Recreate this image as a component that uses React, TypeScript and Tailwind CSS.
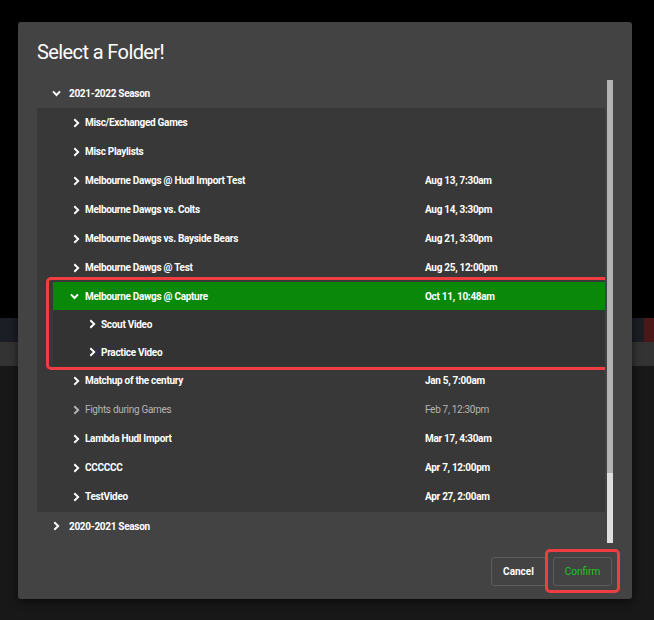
import React from 'react';

type Item = {
  name: string;
  date?: string;
  muted?: boolean;
};

const items: Item[] = [
  { name: 'Misc/Exchanged Games' },
  { name: 'Misc Playlists' },
  { name: 'Melbourne Dawgs @ Hudl Import Test', date: 'Aug 13, 7:30am' },
  { name: 'Melbourne Dawgs vs. Colts', date: 'Aug 14, 3:30pm' },
  { name: 'Melbourne Dawgs vs. Bayside Bears', date: 'Aug 21, 3:30pm' },
  { name: 'Melbourne Dawgs @ Test', date: 'Aug 25, 12:00pm' },
];

const itemsAfter: Item[] = [
  { name: 'Matchup of the century', date: 'Jan 5, 7:00am' },
  { name: 'Fights during Games', date: 'Feb 7, 12:30pm', muted: true },
  { name: 'Lambda Hudl Import', date: 'Mar 17, 4:30am' },
  { name: 'CCCCCC', date: 'Apr 7, 12:00pm' },
  { name: 'TestVideo', date: 'Apr 27, 2:00am' },
];

const ChevronRight = ({ muted }: { muted?: boolean }) => (
  <svg width="7" height="10" viewBox="0 0 7 10" className="shrink-0">
    <path d="M1.3 1.2 L5.2 5 L1.3 8.8" fill="none" stroke={muted ? '#b5b5b5' : '#ffffff'} strokeWidth="1.9" />
  </svg>
);

const ChevronDown = () => (
  <svg width="9" height="7" viewBox="0 0 9 7" className="shrink-0">
    <path d="M1 1.3 L4.5 5 L8 1.3" fill="none" stroke="#ffffff" strokeWidth="1.9" />
  </svg>
);

const Row: React.FC<{ item: Item; indent: number; nameWidth: number; short?: boolean }> = ({
  item,
  indent,
  nameWidth,
  short,
}) => (
  <div className={short ? 'flex h-[28px] items-center' : 'flex h-[29px] items-center'}>
    <div className="flex items-center" style={{ width: nameWidth, paddingLeft: indent }}>
      <div className="w-[12px]">
        <ChevronRight muted={item.muted} />
      </div>
      <span className={item.muted ? 'font-normal text-[#b5b5b5]' : 'font-bold text-white'}>{item.name}</span>
    </div>
    {item.date && (
      <span className={item.muted ? 'font-normal text-[#b5b5b5]' : 'font-bold text-white'}>{item.date}</span>
    )}
  </div>
);

export default function App() {
  return (
    <div className="relative h-[620px] w-[654px] overflow-hidden bg-black font-['Roboto',sans-serif]">
      {/* dimmed page behind the dialog */}
      <div className="flex h-full flex-col">
        <div className="h-[318px] bg-black" />
        <div className="flex h-[24px] bg-[#1b1e24]">
          <div className="flex-1" />
          <div className="w-[10px] bg-[#4a1818]" />
        </div>
        <div className="h-[24px] bg-[#333333]" />
        <div className="flex-1 bg-[#181818]" />
      </div>

      <div className="absolute left-[18px] top-[22px] flex h-[577px] w-[614px] flex-col rounded-[3px] bg-[#434343] shadow-[0_2px_10px_rgba(0,0,0,0.6)]">
        <h1 className="pl-[19px] pt-[18px] text-[20px] leading-[24px] tracking-[-0.6px] text-white">Select a Folder!</h1>

        <div className="mt-[15px] flex h-[464px] pl-[19px] pr-[19px] text-[10px] tracking-[-0.3px]">
          <div className="w-[568px] overflow-hidden">
            <div className="flex h-[29px] items-center pl-[15px] font-bold text-white">
              <div className="w-[17px]">
                <ChevronDown />
              </div>
              <span>2021-2022 Season</span>
            </div>

            <div className="bg-[#383838] pb-[1px]">
              {items.map((it) => (
                <Row key={it.name} item={it} indent={36} nameWidth={388} />
              ))}

              <div className="relative ml-[16px] bg-[#333333]">
                <div className="flex h-[28px] items-center bg-[#0a880a] font-bold text-white">
                  <div className="flex w-[372px] items-center pl-[17px]">
                    <div className="w-[15px]">
                      <ChevronDown />
                    </div>
                    <span>Melbourne Dawgs @ Capture</span>
                  </div>
                  <span>Oct 11, 10:48am</span>
                </div>
                <Row item={{ name: 'Scout Video' }} indent={36} nameWidth={372} short />
                <Row item={{ name: 'Practice Video' }} indent={36} nameWidth={372} short />
                <div className="pointer-events-none absolute -left-[7px] -right-[4px] -top-[5px] -bottom-[4px] rounded-[5px] border-[3px] border-[#ef3e42]" />
              </div>

              {itemsAfter.map((it) => (
                <Row key={it.name} item={it} indent={36} nameWidth={388} />
              ))}
            </div>

            <div className="flex h-[28px] items-center pl-[16px] font-bold text-white">
              <div className="w-[16px]">
                <ChevronRight />
              </div>
              <span>2020-2021 Season</span>
            </div>
          </div>
          <div className="ml-[2px] mt-[1px] flex h-[463px] w-[6px] flex-col">
            <div className="h-[393px] bg-[#b3b3b3]" />
            <div className="flex-1 bg-[#dedede]" />
          </div>
        </div>

        <div className="mt-[14px] flex justify-end gap-[7px] pr-[20px]">
          <button className="h-[29px] w-[55px] rounded-[3px] border border-[#5c5c5c] text-[10px] font-bold text-white">
            Cancel
          </button>
          <div className="relative">
            <button className="h-[29px] w-[59px] rounded-[3px] border border-[#5c5c5c] text-[10px] text-[#22c322]">
              Confirm
            </button>
            <div className="pointer-events-none absolute -left-[8px] -right-[8px] -top-[8px] -bottom-[7px] rounded-[5px] border-[3px] border-[#ef3e42]" />
          </div>
        </div>
      </div>
    </div>
  );
}
